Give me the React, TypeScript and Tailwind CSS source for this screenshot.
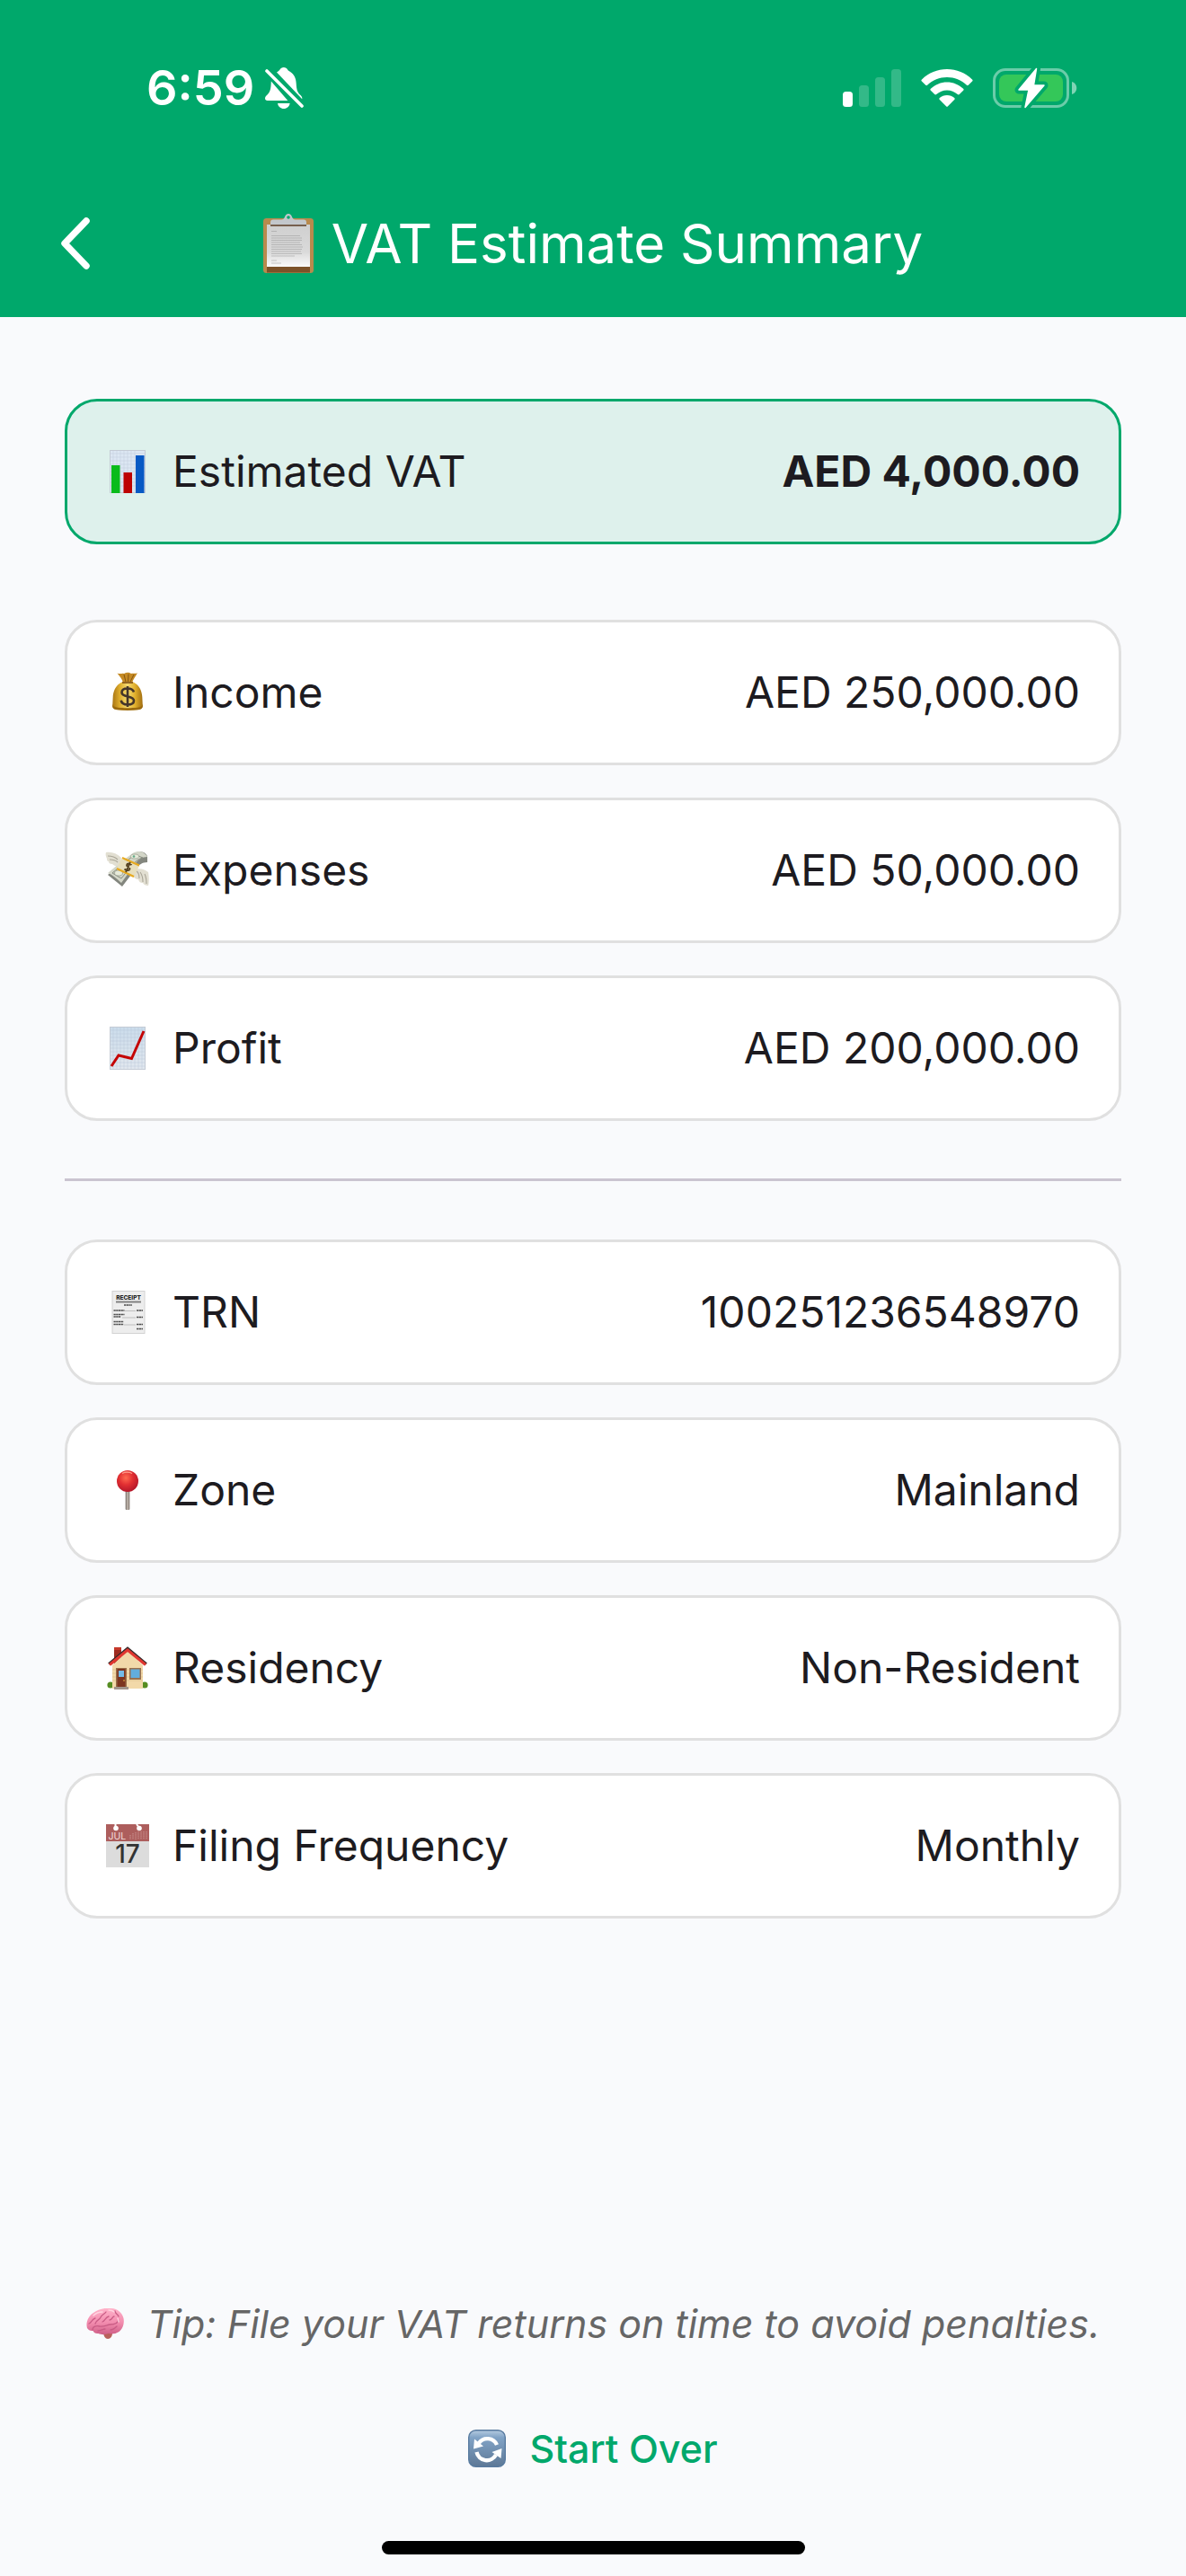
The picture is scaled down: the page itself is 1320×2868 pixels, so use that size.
import type { ReactNode } from "react";

function BellOff() {
  return (
    <svg className="h-[46px] w-[43px]" viewBox="0 0 43 46" fill="#fff" aria-label="Silent mode">
      <path d="M13 5.5C14.6 4.300 15.800 3.600 16.500 2.500 17.300 1 18.800 0 20.800 0s3.500 1 4.300 2.500c.5 1 1.500 1.600 2.700 2.300 4.700 3 6.600 7.300 6.900 13.200.3 6.700 1.300 9.500 4.300 12.500 1.500 1.600 2.300 2.500 2.300 3.800 0 .5 0 .700-.1 1z" />
      <path d="M6.800 15.500 25.300 37H2.700C1 37 0 36 0 34.500c0-1.500.9-2.500 2.500-4.100 3.300-3.200 4-6 4.300-14.900z" />
      <path d="M14 40h13.600c-.5 3.500-3.300 6-6.800 6s-6.300-2.500-6.800-6z" />
      <path d="M2 4 41 43" stroke="#fff" strokeWidth="3.600" strokeLinecap="round" />
    </svg>
  );
}

function Signal() {
  return (
    <svg className="h-[42px] w-[65px]" viewBox="0 0 65 42" fill="#fff" aria-label="Signal strength">
      <rect x="0" y="25" width="11" height="17" rx="3.500" />
      <rect x="18" y="18" width="11" height="24" rx="3.500" opacity=".2" />
      <rect x="36" y="9" width="11" height="33" rx="3.500" opacity=".2" />
      <rect x="54" y="0" width="11" height="42" rx="3.500" opacity=".2" />
    </svg>
  );
}

function Wifi() {
  return (
    <svg className="h-[42px] w-[58px]" viewBox="0 0 58 42" fill="#fff" aria-label="Wi-Fi">
      <path d="M29 0c10.600 0 20.500 4 28 11.500.8.8.8 1.300.1 2l-4.300 4.300c-.7.700-1.300.600-1.900 0C45 12.200 37.300 9 29 9S13 12.200 7.100 17.800c-.6.600-1.200.700-1.900 0L.9 13.500c-.7-.7-.7-1.200.1-2C8.500 4 18.400 0 29 0z" />
      <path d="M29 14.500c6.800 0 13.200 2.600 18.100 7.300.7.700.7 1.300 0 2l-4.300 4.300c-.7.700-1.300.600-2 0C37.500 25.200 33.500 23.500 29 23.500s-8.500 1.700-11.800 4.600c-.7.600-1.300.700-2 0l-4.300-4.300c-.7-.7-.7-1.300 0-2C15.800 17.100 22.200 14.500 29 14.500z" />
      <path d="M29 29c3.200 0 6 1.100 8.200 3 .7.700.6 1.200 0 1.900L30 41.300c-.7.700-1.300.700-2 0l-7.200-7.400c-.6-.7-.7-1.200 0-1.900C23 30.100 25.800 29 29 29z" />
    </svg>
  );
}

function Battery() {
  return (
    <svg className="h-[46px] w-[94px]" viewBox="0 0 94 46" aria-label="Battery charging">
      <rect x="1.500" y="2.500" width="82" height="41" rx="12.500" fill="none" stroke="#fff" strokeOpacity=".42" strokeWidth="3" />
      <path d="M88 16c3.500 1 5.300 3.700 5.300 7s-1.800 6-5.300 7z" fill="#fff" opacity=".5" />
      <rect x="7" y="8" width="71" height="30" rx="8" fill="#34c759" />
      <path d="M48.500 1.500 29 25h11L36 44.500 57 20H45.500z" fill="#00a86b" stroke="#00a86b" strokeWidth="9" strokeLinejoin="round" />
      <path d="M48.500 1.500 29 25h11L36 44.500 57 20H45.500z" fill="#fff" stroke="#fff" strokeWidth="1.500" strokeLinejoin="round" />
    </svg>
  );
}

function Clipboard() {
  return (
    <svg className="h-[66px] w-14" viewBox="0 0 56 66" aria-hidden="true">
      <defs>
        <linearGradient id="paper" x1="0" y1="0" x2="0" y2="1">
          <stop offset="0" stopColor="#cfcfcf" />
          <stop offset=".65" stopColor="#dadada" />
          <stop offset="1" stopColor="#fafafa" />
        </linearGradient>
      </defs>
      <rect x="0" y="5" width="56" height="61" rx="3.500" fill="#b88a4d" />
      <path d="M4 59h48v6.500H4z" fill="#7c5229" />
      <rect x="4" y="12" width="48" height="47" fill="url(#paper)" />
      <path d="M8 12h40v2H8z" fill="#77604f" />
      <path d="M8 12V9.500C8 7.500 9 6.500 11 6.500h9c2.500 0 3-1 4-3C24.700 1.500 26 0 28 0s3.300 1.500 4 3.500c1 2 1.500 3 4 3h9c2 0 3 1 3 3V12z" fill="#c3c7cc" />
      <circle cx="28" cy="4" r="1.800" fill="#00a86b" />
      <path d="M9 19.500h6M9 24.500h32M9 27h34M9 29.500h34M9 32h32M9 34.500h34M9 37h35M9 39.500h34M9 42h33M9 44.500h34M9 47h26M9 52h6M9 55h11" stroke="#8d8d8d" strokeOpacity=".45" strokeWidth="1" />
    </svg>
  );
}

function Emoji({ children }: { children: ReactNode }) {
  return (
    <svg className="size-12 shrink-0 overflow-visible" viewBox="0 0 48 48" aria-hidden="true">
      {children}
    </svg>
  );
}

function BarChart() {
  return (
    <Emoji>
      <rect x="4" y="0" width="40" height="48" fill="#dce7f3" />
      <path d="M4 4h40M4 8h40M4 12h40M4 16h40M4 20h40M4 24h40M4 28h40M4 32h40M4 36h40M4 40h40M8 0v48M12 0v48M16 0v48M20 0v48M24 0v48M28 0v48M32 0v48" stroke="#c8d3e2" strokeWidth=".7" />
      <rect x="4.500" y=".5" width="39" height="47" fill="none" stroke="#c4cbd5" />
      <rect x="6" y="17" width="9.500" height="31" fill="#09bb1b" />
      <rect x="19.500" y="25" width="9.500" height="23" fill="#bd0303" />
      <rect x="33" y="6" width="9.500" height="42" fill="#0759c4" />
    </Emoji>
  );
}

function MoneyBag() {
  return (
    <Emoji>
      <defs>
        <linearGradient id="bag" x1="0" y1="0" x2="1" y2="0">
          <stop offset="0" stopColor="#a87413" />
          <stop offset=".25" stopColor="#dfae2d" />
          <stop offset=".5" stopColor="#f7dc72" />
          <stop offset=".75" stopColor="#e0ae2b" />
          <stop offset="1" stopColor="#a06c10" />
        </linearGradient>
      </defs>
      <path d="M12.500 2.500C16 4 18 2 20 3c3-1.800 6-1.200 8 0 2-1 4 .5 7-.8-2 4-5 7-6 11H19c-1-4-3.500-7-6.500-10.700z" fill="#c58a24" />
      <path d="M20 4l2 8M25 3.500 24.500 12M31 4l-4 8" stroke="#835411" strokeWidth="1" />
      <path d="M19 12h10c6.500 2 11 9 11.300 17l.4 8c1 3.500-1 5.500-4.700 6-8 1-16 1-24 0-3.700-.5-5.700-2.500-4.700-6l.4-8C8 21 12.500 14 19 12z" fill="url(#bag)" />
      <path d="M7.500 38.500c2 2.200 8 2.700 16.500 2.700s14.500-.5 16.500-2.700c.6 2.700-1.200 4.300-4.500 4.700-8 1-16 1-24 0-3.300-.4-5.100-2-4.500-4.700z" fill="#9c6b10" />
      <path d="M18 13h12" stroke="#7d4c12" strokeWidth="1.600" />
      <path d="M31 23.500C30 20.500 27.500 19.500 24 19.500c-4 0-6.500 1.800-6.500 4.500 0 6 13.500 3 13.500 9 0 3-3 4.500-7 4.500-4 0-6.700-1.500-7.300-4.700M24 17v23" fill="none" stroke="#44352a" strokeWidth="2.600" />
    </Emoji>
  );
}

function FlyingMoney() {
  return (
    <Emoji>
      <path d="M2 29 20 14 28 8C31 4 38 2 42 4c2 1 4 3 4 5v6c-6 0-9 3-12 6L18 42z" fill="#83867e" />
      <path d="M2 27 20 12 27 7c4-4 10-5 14-3 2 1 4 3 5 5-6 0-10 3-13 7L17 38C12 33 7 29 2 27z" fill="#d3d6c8" />
      <path d="M7 27 24 13c4-4 8-6 12-5l5 2c-5 1-8 4-11 7L17 33z" fill="none" stroke="#888d80" strokeWidth="1" />
      <ellipse cx="32" cy="8.500" rx="4.500" ry="2.500" fill="#e6ead9" stroke="#999e8f" strokeWidth=".7" />
      <circle cx="31" cy="8.500" r="1.300" fill="#62aa88" />
      <ellipse cx="14" cy="27" rx="4.500" ry="3" fill="#e6ead9" stroke="#999e8f" strokeWidth=".8" />
      <path d="M0 4c6-1 12 1 17 6l-2 8c-3 2-6 1-8-1-3 0-4-1-4-3-2 0-2-2-2-3C0 9-1 6 0 4z" fill="#e2dfd2" />
      <path d="M30 24c6-3 12-2 17 2 1 6 1 12 0 15-3 0-5-1-6-3-3 0-4-1-5-4-3 0-5-2-6-4z" fill="#e2dfd2" />
      <path d="M2 8c4 0 8 1 11 4M4 12c4 0 7 1 9 3M34 25c3 2 3 6 3 8M38 26c3 4 3 8 3 11M43 28c2 4 2 8 2 11" stroke="#aaa698" strokeWidth="1.100" fill="none" />
      <path d="M17 11 37 19 31 31 12 22z" fill="#e7dfbd" />
      <path d="M18 10 37 18.500M12 22l19 9" stroke="#e7aa20" strokeWidth="2.200" />
      <path d="M28.500 18c-2-2-5-2-5.500 0-.7 2.500 4 2 3.500 4.500-.5 2-4 2-6 0M27 15l-5 11" fill="none" stroke="#54411f" strokeWidth="1.900" />
    </Emoji>
  );
}

function TrendChart() {
  return (
    <Emoji>
      <defs>
        <linearGradient id="trend" x1="0" y1="0" x2="0" y2="1">
          <stop offset="0" stopColor="#cbdceb" />
          <stop offset="1" stopColor="#e3e8ef" />
        </linearGradient>
      </defs>
      <rect x="4" y="0" width="40" height="48" fill="url(#trend)" />
      <path d="M4 4h40M4 8h40M4 12h40M4 16h40M4 20h40M4 24h40M4 28h40M4 32h40M4 36h40M4 40h40M4 44h40M8 0v48M12 0v48M16 0v48M20 0v48M24 0v48M28 0v48M32 0v48M36 0v48M40 0v48" stroke="#b8c8d9" strokeOpacity=".6" strokeWidth=".7" />
      <rect x="4.500" y=".5" width="39" height="47" fill="none" stroke="#c4cbd5" />
      <path d="M6 44 14 32 28.500 35.500 42 5" fill="none" stroke="#c40404" strokeWidth="3" />
    </Emoji>
  );
}

function Receipt() {
  return (
    <Emoji>
      <rect x="7" y=".5" width="36" height="47" fill="#ededed" stroke="#d2d2d2" />
      <text x="25" y="10" textAnchor="middle" fontSize="6.500" fontWeight="800" fill="#222" fontFamily="Inter, sans-serif">RECEIPT</text>
      <path d="M11 12.500h28" stroke="#808080" strokeWidth="2" />
      <path d="M20 16h9M8.500 22h12M34 22h7M8.500 26.500h12M8.500 29h8M34 29.500h7M8.500 34.500h11M8.500 37.500h11M34 37.500h7M34 42.500h7" stroke="#4c4c4c" strokeWidth="1.500" strokeDasharray="2.300 .4" />
      <path d="M21 22.500h12M18 30h15M20 38h13" stroke="#aaa" strokeWidth=".7" />
    </Emoji>
  );
}

function Pin() {
  return (
    <Emoji>
      <defs>
        <radialGradient id="pin" cx=".42" cy=".35" r=".65">
          <stop offset="0" stopColor="#ff6a50" />
          <stop offset=".5" stopColor="#e22f32" />
          <stop offset="1" stopColor="#b5172a" />
        </radialGradient>
        <linearGradient id="needle" x1="0" y1="0" x2="1" y2="0">
          <stop offset="0" stopColor="#6b625c" />
          <stop offset=".5" stopColor="#c9bfb5" />
          <stop offset="1" stopColor="#71665e" />
        </linearGradient>
      </defs>
      <rect x="21.700" y="24" width="4.600" height="22" rx="1" fill="url(#needle)" />
      <circle cx="24" cy="14" r="12" fill="url(#pin)" />
      <path d="M18 5.500c3-2 8-2 11 0" stroke="#ff9d8c" strokeWidth="1.400" fill="none" />
    </Emoji>
  );
}

function House() {
  return (
    <Emoji>
      <circle cx="5" cy="43" r="3.600" fill="#568d22" />
      <circle cx="43" cy="43" r="3.600" fill="#568d22" />
      <path d="M9 2h8v12l-8 7z" fill="#9d2b20" />
      <path d="M9 1h8v3H9z" fill="#c6392b" />
      <path d="M7 21 24 5l17 16v26H7z" fill="#f2d9a9" />
      <path d="M7 26h34M7 30h34M7 34h34M7 38h34" stroke="#dec08c" strokeWidth=".7" />
      <path d="M3 19.500 24 2l21 17.500" fill="none" stroke="#33292a" strokeWidth="2.500" />
      <path d="M4 20.500 24 4l20 16.500" fill="none" stroke="#e0372f" strokeWidth="3.200" />
      <rect x="11" y="24" width="12" height="21" fill="#9a6f49" />
      <rect x="12.500" y="25" width="9" height="20" fill="#7c3520" />
      <rect x="14" y="27" width="6" height="7" fill="#74bbe8" />
      <circle cx="20" cy="38" r=".8" fill="#f3c64c" />
      <rect x="26" y="24" width="13" height="13" fill="#99714e" />
      <rect x="27.500" y="25.500" width="10" height="9.500" fill="#62addd" />
      <path d="M9 45h16v3H9z" fill="#a0958c" />
    </Emoji>
  );
}

function Calendar() {
  return (
    <Emoji>
      <rect x="0" y="0" width="48" height="48" fill="#dcdcdc" />
      <rect x="0" y="0" width="48" height="19" fill="#ad5e5d" />
      <path d="M10.500 0v4M34 0l3 4" stroke="#fff" strokeWidth="2" />
      <circle cx="11" cy="4.500" r="2.800" fill="#fff" />
      <circle cx="37" cy="4.500" r="2.800" fill="#fff" />
      <text x="2.500" y="16.500" fontSize="10.500" fill="#f4dede" fontFamily="Inter, sans-serif">JUL</text>
      <path d="M27 12v5M30 10v7M33 9v8M36 8v9M39 8v9M42 8v9M45 8v9" stroke="#cc9694" strokeWidth="1" strokeDasharray="1.500 .7" />
      <text x="24" y="43" textAnchor="middle" fontSize="28" fontWeight="500" fill="#333" fontFamily="Inter, sans-serif">17</text>
    </Emoji>
  );
}

function Brain() {
  return (
    <svg className="h-[34px] w-[42px] shrink-0" viewBox="0 0 42 34" aria-hidden="true">
      <defs>
        <linearGradient id="cortex" x1="0" y1="0" x2="0" y2="1">
          <stop offset="0" stopColor="#ffb3ca" />
          <stop offset=".55" stopColor="#f28cae" />
          <stop offset="1" stopColor="#cf5f87" />
        </linearGradient>
      </defs>
      <path d="M19 27c1-3 9-4 10 0 .3 4-2 7-5 7s-4.500-3-5-7z" fill="#b9605b" />
      <path d="M1 22C-1 15 3 8 8 5c5-4 13-6 20-5 7 .5 12 5 13.500 11 1.200 6-1 12-5 15-4 2.500-8 3-12 2-3 1.500-8 1.500-11 0-3 .5-5-1-6-3-3 .5-5-1-6.500-3z" fill="url(#cortex)" />
      <path d="M7 24c0-4 4-5 8-4 5 1 8-2 12-2 5 0 8-2 9-5M3 17c3-1 3-5 7-6M10 17c1-4 5-4 6-7 1-3 4-3 6-6M18 15c3-1 3-5 7-6M26 13c3 0 3-4 5-4M32 3c0 3 3 3 4 6M13 25c4 0 5-2 8-2M27 24c3 0 5-2 7-4" fill="none" stroke="#c95c85" strokeWidth="1.300" strokeLinecap="round" />
      <path d="M8 8c3-3 7-4 10-4M25 2c3 0 4 0 6 2M35 11c1 2 1 3 1 4" fill="none" stroke="#ffd3e0" strokeWidth="1.400" strokeLinecap="round" />
    </svg>
  );
}

function Sync() {
  return (
    <svg className="size-[42px] shrink-0" viewBox="0 0 42 42" aria-hidden="true">
      <defs>
        <linearGradient id="key" x1="0" y1="0" x2="0" y2="1">
          <stop offset="0" stopColor="#b5cbe0" />
          <stop offset=".2" stopColor="#81a3c6" />
          <stop offset="1" stopColor="#5d7896" />
        </linearGradient>
      </defs>
      <rect x=".7" y=".7" width="40.600" height="40.600" rx="8" fill="url(#key)" stroke="#597ba0" strokeWidth="1.400" />
      <path d="M32 17A11.500 11.500 0 0 0 12 15M9.500 25A11.500 11.500 0 0 0 31 28" fill="none" stroke="#fff" strokeWidth="4.300" />
      <path d="M7 10.500 6 21.500 17 18.500zM37.500 21 36.500 32 26.500 25z" fill="#fff" />
    </svg>
  );
}

type RowProps = { icon: ReactNode; label: string; value: string; highlight?: boolean };

function Row({ icon, label, value, highlight = false }: RowProps) {
  return (
    <div
      className={
        highlight
          ? "flex h-[162px] items-center justify-between rounded-[36px] border-3 border-[#00a86b] bg-[#def1ec] px-[43px]"
          : "flex h-[162px] items-center justify-between rounded-[36px] border-3 border-[#e0e0e0] bg-white px-[43px]"
      }
    >
      <dt className="flex items-center gap-[26px]">
        {icon}
        <span>{label}</span>
      </dt>
      <dd className={highlight ? "font-bold" : "font-normal"}>{value}</dd>
    </div>
  );
}

export default function App() {
  return (
    <div className="flex min-h-screen flex-col bg-[#f9fafc] font-['Inter',sans-serif] text-[#1d1b20]">
      <header className="bg-[#00a86b] text-white">
        <div className="flex h-[196px] items-center justify-between pr-[121px] pl-[163px]">
          <div className="flex items-center gap-3">
            <span className="text-[54px] leading-[60px] font-semibold">6:59</span>
            <BellOff />
          </div>
          <div className="flex items-center gap-[22px]">
            <Signal />
            <Wifi />
            <Battery />
          </div>
        </div>
        <div className="grid h-[157px] grid-cols-[120px_1fr_120px] items-center pb-2">
          <button type="button" aria-label="Back" className="flex h-24 items-center pl-[66px]">
            <svg className="h-[60px] w-9" viewBox="0 0 36 60" fill="none" aria-hidden="true">
              <path d="M30 5 6 30l24 25" stroke="#fff" strokeWidth="7.500" strokeLinecap="round" strokeLinejoin="round" />
            </svg>
          </button>
          <h1 className="flex items-center justify-center gap-5 text-[60px] leading-[76px] whitespace-nowrap">
            <Clipboard />
            <span>VAT Estimate Summary</span>
          </h1>
        </div>
      </header>

      <main className="flex grow flex-col px-[72px] pt-[91px] text-[48px] leading-[72px]">
        <dl>
          <Row icon={<BarChart />} label="Estimated VAT" value="AED 4,000.00" highlight />
        </dl>
        <dl className="mt-[84px] flex flex-col gap-9">
          <Row icon={<MoneyBag />} label="Income" value="AED 250,000.00" />
          <Row icon={<FlyingMoney />} label="Expenses" value="AED 50,000.00" />
          <Row icon={<TrendChart />} label="Profit" value="AED 200,000.00" />
        </dl>
        <hr className="mt-16 mb-[65px] border-t-3 border-[#cac4d0]" />
        <dl className="flex flex-col gap-9">
          <Row icon={<Receipt />} label="TRN" value="100251236548970" />
          <Row icon={<Pin />} label="Zone" value="Mainland" />
          <Row icon={<House />} label="Residency" value="Non-Resident" />
          <Row icon={<Calendar />} label="Filing Frequency" value="Monthly" />
        </dl>
      </main>

      <footer className="flex flex-col items-center pb-6">
        <p className="flex items-center gap-[26px] text-[43px] leading-[60px] text-[#666] italic">
          <Brain />
          <span>Tip: File your VAT returns on time to avoid penalties.</span>
        </p>
        <button type="button" className="mt-[79px] flex items-center gap-[26px] text-[43px] leading-[60px] font-medium text-[#00a86b]">
          <Sync />
          <span>Start Over</span>
        </button>
        <div className="mt-[73px] h-[15px] w-[471px] rounded-full bg-black" />
      </footer>
    </div>
  );
}
